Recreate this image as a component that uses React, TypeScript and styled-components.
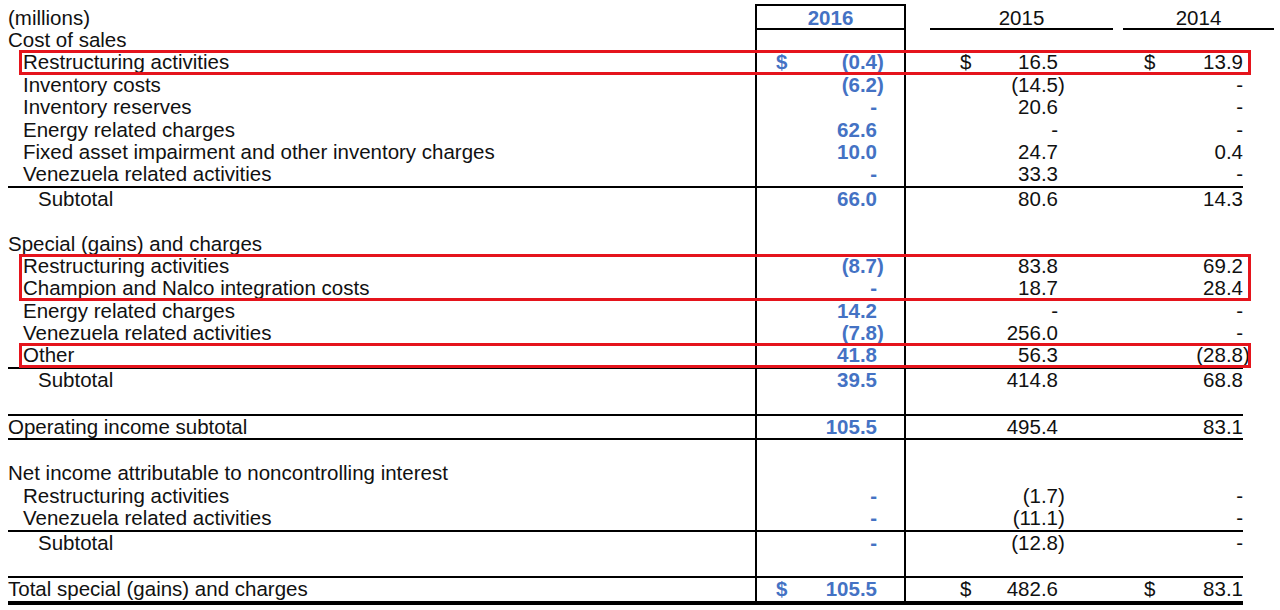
import { Fragment } from "react";
import styled, { createGlobalStyle } from "styled-components";

const GlobalStyle = createGlobalStyle`
  html, body {
    margin: 0;
    padding: 0;
    background: #ffffff;
  }
  body {
    font-family: "Liberation Sans", Arial, sans-serif;
    font-size: 20.5px;
    color: #111111;
  }
`;

const BLUE = "#4472c4";
const RED = "#e5141c";

type Level = 0 | 1 | 2;
type Rule = "none" | "top" | "both" | "total";

interface Line {
  label?: string;
  level?: Level;
  values?: [string, string, string];
  dollar?: boolean;
  rule?: Rule;
}

interface Group {
  highlight?: boolean;
  lines: Line[];
}

const Page = styled.div`
  padding: 4px 0 0 8px;
  width: 1235px;
`;

const Row = styled.div<{ $rule: Rule }>`
  display: grid;
  grid-template-columns: 747px 151px 207px 130px;
  height: 22.4px;
  line-height: 22.4px;
  white-space: nowrap;
  border-top: ${(p) => (p.$rule === "none" ? "0" : "2px solid #000")};
  border-bottom: ${(p) =>
    p.$rule === "both" ? "2px solid #000" : p.$rule === "total" ? "4px solid #000" : "0"};
`;

const HeaderRow = styled.div`
  display: grid;
  grid-template-columns: 747px 151px 207px 130px;
  height: 25px;
  line-height: 21px;
`;

const Label = styled.div<{ $level: Level }>`
  padding-left: ${(p) => p.$level * 15}px;
`;

const HeadLabel = styled.div`
  padding-top: 3px;
`;

const Year2016 = styled.div`
  border: 2px solid #000;
  padding-top: 1px;
  text-align: center;
  color: ${BLUE};
  font-weight: bold;
`;

const YearCell = styled.div<{ $left: number; $right: number }>`
  margin-left: ${(p) => p.$left}px;
  margin-right: ${(p) => p.$right}px;
  padding-top: 3px;
  border-bottom: 2px solid #000;
  text-align: center;
`;

const Cell = styled.div<{ $left: number; $right: number; $current?: boolean }>`
  display: flex;
  justify-content: flex-end;
  padding: 0 ${(p) => p.$right}px 0 ${(p) => p.$left}px;
  border-left: ${(p) => (p.$current ? "2px solid #000" : "0")};
  border-right: ${(p) => (p.$current ? "2px solid #000" : "0")};
  color: ${(p) => (p.$current ? BLUE : "inherit")};
  font-weight: ${(p) => (p.$current ? "bold" : "normal")};
`;

const Dollar = styled.span`
  margin-right: auto;
`;

const Hang = styled.span`
  display: inline-block;
  width: 0;
  overflow: visible;
`;

const Highlight = styled.div`
  position: relative;

  &::after {
    content: "";
    position: absolute;
    top: -1px;
    bottom: -1px;
    left: 11px;
    right: -8px;
    border: 3px solid ${RED};
    pointer-events: none;
  }
`;

const columns = [
  { left: 19, right: 27, current: true },
  { left: 54, right: 55, current: false },
  { left: 31, right: 0, current: false },
];

function Amount({ value }: { value: string }) {
  if (value.startsWith("(")) {
    return (
      <span>
        {value.slice(0, -1)}
        <Hang>)</Hang>
      </span>
    );
  }
  return <span>{value}</span>;
}

const groups: Group[] = [
  { lines: [{ label: "Cost of sales" }] },
  {
    highlight: true,
    lines: [{ label: "Restructuring activities", level: 1, values: ["(0.4)", "16.5", "13.9"], dollar: true }],
  },
  {
    lines: [
      { label: "Inventory costs", level: 1, values: ["(6.2)", "(14.5)", "-"] },
      { label: "Inventory reserves", level: 1, values: ["-", "20.6", "-"] },
      { label: "Energy related charges", level: 1, values: ["62.6", "-", "-"] },
      { label: "Fixed asset impairment and other inventory charges", level: 1, values: ["10.0", "24.7", "0.4"] },
      { label: "Venezuela related activities", level: 1, values: ["-", "33.3", "-"] },
      { label: "Subtotal", level: 2, values: ["66.0", "80.6", "14.3"], rule: "top" },
      {},
      { label: "Special (gains) and charges" },
    ],
  },
  {
    highlight: true,
    lines: [
      { label: "Restructuring activities", level: 1, values: ["(8.7)", "83.8", "69.2"] },
      { label: "Champion and Nalco integration costs", level: 1, values: ["-", "18.7", "28.4"] },
    ],
  },
  {
    lines: [
      { label: "Energy related charges", level: 1, values: ["14.2", "-", "-"] },
      { label: "Venezuela related activities", level: 1, values: ["(7.8)", "256.0", "-"] },
    ],
  },
  {
    highlight: true,
    lines: [{ label: "Other", level: 1, values: ["41.8", "56.3", "(28.8)"] }],
  },
  {
    lines: [
      { label: "Subtotal", level: 2, values: ["39.5", "414.8", "68.8"], rule: "top" },
      {},
      { label: "Operating income subtotal", values: ["105.5", "495.4", "83.1"], rule: "both" },
      {},
      { label: "Net income attributable to noncontrolling interest" },
      { label: "Restructuring activities", level: 1, values: ["-", "(1.7)", "-"] },
      { label: "Venezuela related activities", level: 1, values: ["-", "(11.1)", "-"] },
      { label: "Subtotal", level: 2, values: ["-", "(12.8)", "-"], rule: "top" },
      {},
      { label: "Total special (gains) and charges", values: ["105.5", "482.6", "83.1"], dollar: true, rule: "total" },
    ],
  },
];

function TableLine({ line }: { line: Line }) {
  return (
    <Row $rule={line.rule ?? "none"}>
      <Label $level={line.level ?? 0}>{line.label}</Label>
      {columns.map((col, i) => (
        <Cell key={i} $left={col.left} $right={col.right} $current={col.current}>
          {line.values && line.dollar && <Dollar>$</Dollar>}
          {line.values && <Amount value={line.values[i]} />}
        </Cell>
      ))}
    </Row>
  );
}

export default function App() {
  return (
    <>
      <GlobalStyle />
      <Page>
        <HeaderRow>
          <HeadLabel>(millions)</HeadLabel>
          <Year2016>2016</Year2016>
          <YearCell $left={24} $right={0}>2015</YearCell>
          <YearCell $left={10} $right={-31}>2014</YearCell>
        </HeaderRow>
        {groups.map((group, gi) => {
          const body = group.lines.map((line, li) => <TableLine key={li} line={line} />);
          return group.highlight ? (
            <Highlight key={gi}>{body}</Highlight>
          ) : (
            <Fragment key={gi}>{body}</Fragment>
          );
        })}
      </Page>
    </>
  );
}
